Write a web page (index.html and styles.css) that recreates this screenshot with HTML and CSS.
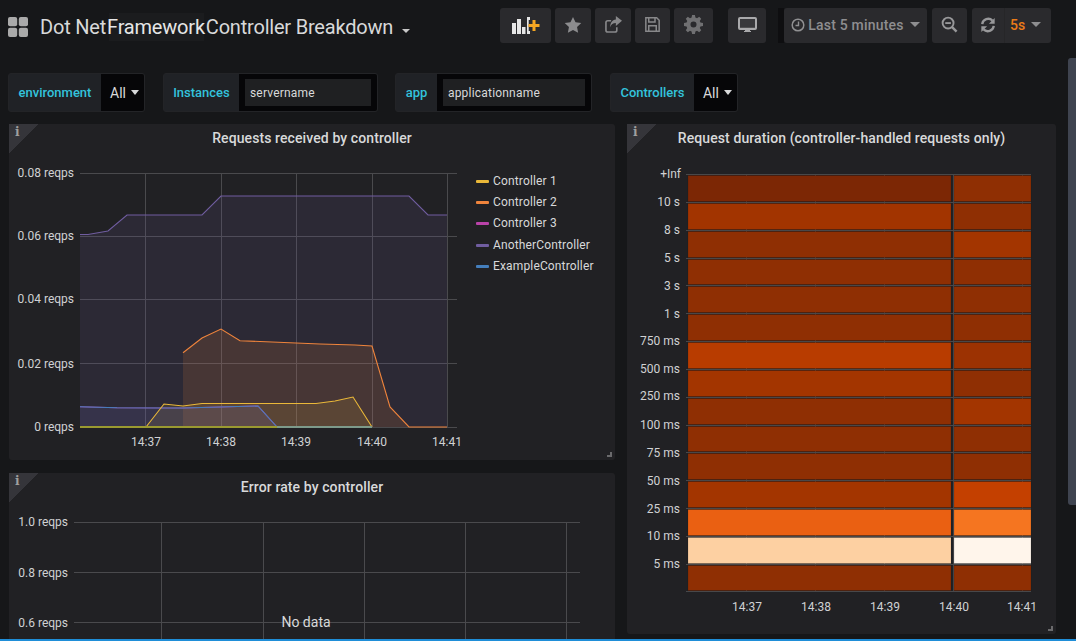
FILE: index.html
```html
<!DOCTYPE html>
<html lang="en">
<head>
<meta charset="utf-8">
<title>Dot Net Framework Controller Breakdown</title>
<link rel="stylesheet" href="styles.css">
</head>
<body>
<div class="page">
  <header class="navbar">
    <div class="brand">
      <svg class="logo" viewBox="0 0 20 20"><rect x="0" y="0" width="9.2" height="9.2" rx="2"/><rect x="10.8" y="0" width="9.2" height="9.2" rx="2"/><rect x="0" y="10.8" width="9.2" height="9.2" rx="2"/><rect x="10.8" y="10.8" width="9.2" height="9.2" rx="2"/></svg>
      <h1 class="dash-title"><span>Dot Net</span><span class="hl">Framework</span><span>Controller Breakdown</span></h1>
      <span class="title-caret"></span>
    </div>
    <div class="actions">
      <button class="btn b-add"><svg viewBox="0 0 28 18" width="28" height="18"><g fill="#e6e6e6"><rect x="0" y="7" width="4" height="11"/><rect x="5" y="3" width="4" height="15"/><rect x="10" y="11" width="3.500" height="7"/><path d="M15 1h3v3h-1.300v11H18v3h-3z"/></g><path fill="#f5a623" d="M20.500 4h3v4h4v3h-4v4h-3v-4h-4V8h4z"/></svg></button>
      <button class="btn b-star"><svg viewBox="0 0 20 20" width="18" height="18"><path fill="#8c8c8e" d="M10 1l2.800 6 6.400.8-4.700 4.400 1.200 6.500L10 15.500l-5.700 3.200 1.200-6.500L.8 7.800 7.200 7z"/></svg></button>
      <button class="btn b-share"><svg viewBox="0 0 18 18" width="17" height="17"><path fill="none" stroke="#88888a" stroke-width="1.700" d="M12.500 12v3a2 2 0 0 1-2 2H3a2 2 0 0 1-2-2V7a2 2 0 0 1 2-2h3.500"/><path fill="#88888a" d="M11.500 0L18 5l-6.500 5.500V7.500C8.500 7.500 6.500 8.800 5.500 12c0-5 2-7.800 6-8.400z"/></svg></button>
      <button class="btn b-save"><svg viewBox="0 0 18 18" width="15" height="15"><path fill="none" stroke="#88888a" stroke-width="1.800" d="M1 1h13l3 3v13H1z"/><path fill="none" stroke="#88888a" stroke-width="1.800" d="M4.500 1v5h7.500V1M4.500 17v-6.500h9V17"/></svg></button>
      <button class="btn b-cog"><svg viewBox="0 0 20 20" width="19" height="19"><path fill="#707072" d="M8.500 0h3l.5 2.700 1.700.7 2.300-1.500 2.100 2.100-1.500 2.300.7 1.700 2.700.5v3l-2.700.5-.7 1.700 1.500 2.300-2.100 2.100-2.300-1.500-1.700.7-.5 2.700h-3L8 17.300l-1.700-.7L4 18.100 1.900 16l1.500-2.300-.7-1.700L0 11.500v-3l2.700-.5.7-1.700L1.900 4 4 1.900l2.300 1.500L8 2.700zM10 6.800a3.200 3.200 0 1 0 0 6.400 3.200 3.200 0 0 0 0-6.400z" fill-rule="evenodd"/></svg></button>
      <button class="btn b-tv"><svg viewBox="0 0 19 15" width="19" height="15"><path fill="#a9a9ab" fill-rule="evenodd" d="M2 0h15a2 2 0 0 1 2 2v9a2 2 0 0 1-2 2h-5v1h1v1H6v-1h1v-1H2a2 2 0 0 1-2-2V2a2 2 0 0 1 2-2zm0 2v8.500h15V2z"/><rect x="2" y="2" width="15" height="8.500" fill="#38383b"/></svg></button>
      <div class="sliver"></div>
      <button class="btn b-time"><svg class="clock" viewBox="0 0 14 14" width="14" height="14"><circle cx="7" cy="7" r="5.800" fill="none" stroke="#909092" stroke-width="1.500"/><path d="M7.500 3.500V7.500H4.500" fill="none" stroke="#909092" stroke-width="1.400"/></svg><span class="time-text">Last 5 minutes</span><span class="caret"></span></button>
      <button class="btn b-zoom"><svg viewBox="0 0 18 18" width="17" height="17"><circle cx="7.500" cy="7.500" r="5.800" fill="none" stroke="#98989a" stroke-width="2"/><path d="M4.500 7.500h6" stroke="#98989a" stroke-width="2"/><path d="M11.500 11.500l5 5" stroke="#98989a" stroke-width="2.600"/></svg></button>
      <div class="btn b-refresh">
        <span class="ref-icon"><svg viewBox="0 0 18 18" width="16" height="16"><path fill="none" stroke="#98989a" stroke-width="2.600" d="M2.500 8a6.800 6.800 0 0 1 11.500-4M15.500 10A6.800 6.800 0 0 1 4 14"/><path fill="#98989a" d="M16.500 1v6.500H10zM1.500 17v-6.500H8z"/></svg></span>
        <span class="ref-int"><span class="interval">5s</span><span class="caret"></span></span>
      </div>
    </div>
  </header>

  <section class="submenu">
    <div class="var v-env"><label class="var-label l-env">environment</label><div class="var-val"><span>All</span><span class="caret light"></span></div></div>
    <div class="var"><label class="var-label l-inst">Instances</label><div class="var-input i-inst"><span class="field">servername</span></div></div>
    <div class="var v-app"><label class="var-label l-app">app</label><div class="var-input i-app"><span class="field">applicationname</span></div></div>
    <div class="var"><label class="var-label l-ctl">Controllers</label><div class="var-val"><span>All</span><span class="caret light"></span></div></div>
  </section>

  <main class="dash">
    <div class="col-left">
      <article class="panel p-req">
        <div class="info"><span>i</span></div>
        <h2 class="panel-title">Requests received by controller</h2>
        <div class="graph-row">
          <svg class="plot" width="458" height="308" viewBox="9 152 458 308">
            <g class="grid">
              <path d="M80 173.500H457M80 236.500H457M80 299.500H457M80 363.500H457M80 427.500H457"/>
              <path d="M145.500 173V427M221.500 173V427M296.500 173V427M372.500 173V427M447.500 173V427"/>
            </g>
            <polygon fill="#705da0" fill-opacity=".14" points="80,234.500 88,234.500 108,231 127,215 202,215 221,196 409,196 428,215 447,215 447,427 80,427"/>
            <polygon fill="#ef843c" fill-opacity=".14" points="183,352.700 202,338 221,329 240,340.700 320,344 355,345 372,346 390,407 409,427 183,427"/>
            <polygon fill="#eab839" fill-opacity=".12" points="146,427 164,404 183,406 202,403.500 316,403.500 335,401 353,397 372,427"/>
            <polygon fill="#447ebc" fill-opacity=".11" points="80,406.700 117,407.700 183,408 258,406 277,427 80,427"/>
            <polygon fill="#ba43a9" fill-opacity=".06" points="80,406.700 117,407.700 183,408 258,406 277,427 80,427"/>
            <polyline class="ln" stroke="#705da0" points="80,234.500 88,234.500 108,231 127,215 202,215 221,196 409,196 428,215 447,215"/>
            <polyline class="ln" stroke="#ba43a9" points="80,406.700 117,407.700 183,408 258,406 277,427"/>
            <polyline class="ln" stroke="#447ebc" points="80,406.700 117,407.700 183,408 258,406 277,427 372,427"/>
            <polyline class="ln" stroke="#ef843c" points="183,352.700 202,338 221,329 240,340.700 320,344 355,345 372,346 390,407 409,427 447,427"/>
            <polyline class="ln" stroke="#eab839" points="146,427 164,404 183,406 202,403.500 316,403.500 335,401 353,397 372,427"/>
            <path stroke="#9a9a30" stroke-width="2" d="M80 427H277"/>
            <path stroke="#7d9a8a" stroke-width="2" d="M277 427H372"/>
            <g class="ax end">
              <text x="74" y="177">0.08 reqps</text><text x="74" y="240">0.06 reqps</text><text x="74" y="303">0.04 reqps</text><text x="74" y="368">0.02 reqps</text><text x="74" y="431">0 reqps</text>
            </g>
            <g class="ax mid">
              <text x="146" y="446">14:37</text><text x="221" y="446">14:38</text><text x="296" y="446">14:39</text><text x="372" y="446">14:40</text><text x="447" y="446">14:41</text>
            </g>
          </svg>
          <ul class="legend">
            <li><i class="c1"></i>Controller 1</li>
            <li><i class="c2"></i>Controller 2</li>
            <li><i class="c3"></i>Controller 3</li>
            <li><i class="c4"></i>AnotherController</li>
            <li><i class="c5"></i>ExampleController</li>
          </ul>
        </div>
        <div class="resize"></div>
      </article>
      <article class="panel p-err">
        <div class="info"><span>i</span></div>
        <h2 class="panel-title">Error rate by controller</h2>
        <svg class="plot" width="606" height="140" viewBox="9 501 606 140">
          <g class="grid">
            <path d="M74 522.500H580M74 572.500H580M74 622.500H580"/>
            <path d="M161.500 522V641M263.500 522V641M364.500 522V641M465.500 522V641M566.500 522V641"/>
          </g>
          <g class="ax end">
            <text x="68" y="526">1.0 reqps</text><text x="68" y="577">0.8 reqps</text><text x="68" y="627">0.6 reqps</text>
          </g>
        </svg>
        <div class="nodata">No data</div>
      </article>
    </div>
    <article class="panel p-heat">
      <div class="info"><span>i</span></div>
      <h2 class="panel-title">Request duration (controller-handled requests only)</h2>
      <svg class="plot" width="429" height="482" viewBox="627 152 429 482">
        <g class="grid heat-grid">
          <path d="M746.500 174V592M815.500 174V592M884.500 174V592M953.500 174V592M1022.500 174V592"/>
          <path d="M686 174.500H1031M686 202.500H1031M686 230.500H1031M686 258.500H1031M686 285.500H1031M686 313.500H1031M686 341.500H1031M686 369.500H1031M686 397.500H1031M686 425.500H1031M686 452.500H1031M686 480.500H1031M686 508.500H1031M686 536.500H1031M686 564.500H1031M686 591.500H1031"/>
        </g>
        <g class="cells">
          <rect x="688" y="175.500" width="263" height="26" fill="#7c2705"/><rect x="954" y="175.500" width="77" height="26" fill="#8f2f03"/>
          <rect x="688" y="203.500" width="263" height="26" fill="#a23400"/><rect x="954" y="203.500" width="77" height="26" fill="#8f2f03"/>
          <rect x="688" y="231.500" width="263" height="26" fill="#8f2f03"/><rect x="954" y="231.500" width="77" height="26" fill="#a33500"/>
          <rect x="688" y="259.500" width="263" height="25" fill="#8f2f03"/><rect x="954" y="259.500" width="77" height="25" fill="#8f2f03"/>
          <rect x="688" y="286.500" width="263" height="26" fill="#8f2f03"/><rect x="954" y="286.500" width="77" height="26" fill="#8f2f03"/>
          <rect x="688" y="314.500" width="263" height="26" fill="#8f2f03"/><rect x="954" y="314.500" width="77" height="26" fill="#8f2f03"/>
          <rect x="688" y="342.500" width="263" height="26" fill="#b83c00"/><rect x="954" y="342.500" width="77" height="26" fill="#9c3202"/>
          <rect x="688" y="370.500" width="263" height="26" fill="#a33500"/><rect x="954" y="370.500" width="77" height="26" fill="#8f2f03"/>
          <rect x="688" y="398.500" width="263" height="26" fill="#8f2f03"/><rect x="954" y="398.500" width="77" height="26" fill="#a33500"/>
          <rect x="688" y="426.500" width="263" height="25" fill="#8f2f03"/><rect x="954" y="426.500" width="77" height="25" fill="#8f2f03"/>
          <rect x="688" y="453.500" width="263" height="26" fill="#8f2f03"/><rect x="954" y="453.500" width="77" height="26" fill="#8f2f03"/>
          <rect x="688" y="481.500" width="263" height="26" fill="#a33500"/><rect x="954" y="481.500" width="77" height="26" fill="#c44000"/>
          <rect x="688" y="509.500" width="263" height="26" fill="#ea6012"/><rect x="954" y="509.500" width="77" height="26" fill="#f57520"/>
          <rect x="688" y="537.500" width="263" height="26" fill="#fdd0a2"/><rect x="954" y="537.500" width="77" height="26" fill="#fff5eb"/>
          <rect x="688" y="565.500" width="263" height="25" fill="#8f2f03"/><rect x="954" y="565.500" width="77" height="25" fill="#8f2f03"/>
        </g>
        <g class="ax end">
          <text x="681" y="178">+Inf</text><text x="680" y="206">10 s</text><text x="680" y="234">8 s</text><text x="680" y="262">5 s</text><text x="680" y="290">3 s</text><text x="680" y="318">1 s</text><text x="680" y="345">750 ms</text><text x="680" y="373">500 ms</text><text x="680" y="400">250 ms</text><text x="680" y="429">100 ms</text><text x="680" y="457">75 ms</text><text x="680" y="485">50 ms</text><text x="680" y="513">25 ms</text><text x="680" y="540">10 ms</text><text x="680" y="568">5 ms</text>
        </g>
        <g class="ax mid">
          <text x="747" y="611">14:37</text><text x="816" y="611">14:38</text><text x="885" y="611">14:39</text><text x="954" y="611">14:40</text><text x="1022" y="611">14:41</text>
        </g>
      </svg>
      <div class="resize"></div>
    </article>
  </main>
</div>
<div class="scrollbar"></div>
<div class="bottom-line"></div>
</body>
</html>
```
FILE: styles.css
```css
* { box-sizing: border-box; }
html, body { margin: 0; height: 100%; overflow: hidden; background: #161719; }
body { font-family: Roboto, "Liberation Sans", sans-serif; color: #d8d9da; }
.page { width: 1076px; height: 641px; overflow: hidden; }

.navbar { height: 51px; padding: 8px 25px 0 8px; display: flex; justify-content: space-between; align-items: flex-start; }
.brand { display: flex; align-items: center; height: 38px; }
.logo { width: 20px; height: 20px; fill: #aaaaaa; margin-right: 12px; }
.dash-title { margin: 0; font-size: 20px; font-weight: 400; letter-spacing: -.2px; color: #d8d9da; display: flex; gap: 1px; white-space: nowrap; position: relative; z-index: 0; }
.dash-title .hl { position: relative; color: #e6e6e6; }
.dash-title .hl::before { content: ""; position: absolute; z-index: -1; left: 2px; right: 1px; top: -2px; height: 28px; background: #1b1c1e; }
.title-caret { margin: 7px 0 0 9px; border: 4px solid transparent; border-top-color: #c8c8c8; border-bottom-width: 0; }

.actions { display: flex; align-items: flex-start; gap: 4px; }
.btn { height: 35px; background: #2a2a2d; border: 0; border-radius: 3px; padding: 0; display: flex; align-items: center; justify-content: center; color: #8e8e90; font: inherit; }
.btn > svg { margin-top: -2px; }
.b-add { width: 51px; }
.b-star { width: 36px; }
.b-share { width: 36px; }
.b-save { width: 35px; }
.b-cog { width: 39px; margin-right: 11px; }
.b-tv { width: 38px; margin-right: 8px; }
.sliver { width: 6px; height: 35px; background: #0e0e10; margin-right: -4px; }
.b-time { width: 143px; font-size: 14px; padding-bottom: 2px; }
.b-time .clock { margin-top: 0; margin-right: 3px; }
.time-text { color: #8e8e90; font-weight: 500; letter-spacing: .2px; }
.caret { width: 0; height: 0; border: 5px solid transparent; border-top-color: #8e8e90; border-bottom-width: 0; margin-left: 6px; }
.caret.light { border-top-color: #d8d9da; border-width: 5px 4px 0; margin-left: 5px; }
.b-zoom { width: 35px; margin-left: 1px; }
.b-refresh { width: 79px; justify-content: flex-start; margin-left: 1px; }
.ref-icon { width: 33px; height: 35px; padding-bottom: 2px; display: flex; align-items: center; justify-content: center; border-right: 1px solid #262628; }
.ref-int { display: flex; align-items: center; padding: 0 0 2px 5px; font-size: 14px; font-weight: 500; }
.interval { color: #eb7b18; }

.submenu { height: 73px; padding: 22px 0 0 8px; display: flex; align-items: flex-start; gap: 17px; }
.var { display: flex; height: 39px; background: #202226; border: 1px solid #232427; border-radius: 3px; overflow: hidden; }
.v-env, .v-app { margin-right: 1px; }
.var-label { font-size: 13px; font-weight: 500; color: #33c3dc; display: flex; align-items: center; justify-content: center; }
.l-env { width: 92px; }
.l-inst { width: 75px; }
.l-app { width: 41px; }
.l-ctl { width: 83px; }
.var-val { background: #060608; color: #d8d9da; font-size: 14px; padding: 0 5px 0 9px; display: flex; align-items: center; }
.var-input { background: #060608; padding: 5px 6px; display: flex; }
.i-inst { width: 138px; }
.i-app { width: 154px; }
.field { flex: 1; background: #1f2022; color: #d8d9da; font-size: 12px; letter-spacing: .2px; padding-left: 5px; display: flex; align-items: center; }

.dash { display: flex; gap: 12px; padding-left: 9px; }
.col-left { width: 606px; display: flex; flex-direction: column; gap: 13px; }
.panel { position: relative; background: #212124; border-radius: 3px; }
.p-req { height: 336px; }
.p-err { height: 300px; }
.p-heat { width: 429px; height: 510px; }
.panel-title { margin: 0; height: 28px; line-height: 28px; text-align: center; font-size: 14px; font-weight: 500; letter-spacing: .1px; color: #d8d9da; }
.plot { display: block; }
.graph-row { display: flex; }

.info { position: absolute; left: 0; top: 0; width: 30px; height: 30px; background: linear-gradient(135deg, #35353a 50%, transparent 50%); }
.info span { position: absolute; left: 6px; top: 1px; font: 700 12px "DejaVu Serif", serif; color: #a0a0a0; }
.resize { position: absolute; right: 3px; bottom: 3px; width: 5px; height: 5px; border-right: 2px solid #6a6a6c; border-bottom: 2px solid #6a6a6c; }
.nodata { position: absolute; left: 0; width: 594px; top: 141px; text-align: center; font-size: 14px; color: #d8d9da; }

.grid path { fill: none; stroke: #4a4a4d; stroke-width: 1; }
.heat-grid path { stroke: #48484a; }
.cells rect { stroke: #000; stroke-opacity: .12; stroke-width: 1; }
.ln { fill: none; stroke-width: 1.100; }
.ax text { font-size: 12px; fill: #d0d1d3; font-family: Roboto, "Liberation Sans", sans-serif; }
.ax.end text { text-anchor: end; }
.ax.mid text { text-anchor: middle; }

.legend { list-style: none; margin: 0; padding: 19px 0 0 9px; font-size: 12px; letter-spacing: .15px; color: #d8d9da; }
.legend li { height: 21.2px; line-height: 21.2px; display: flex; align-items: center; white-space: nowrap; }
.legend i { width: 13px; height: 3px; margin-right: 4px; border-radius: 1px; }
.c1 { background: #eab839; } .c2 { background: #ef843c; } .c3 { background: #ba43a9; } .c4 { background: #705da0; } .c5 { background: #447ebc; }

.scrollbar { position: fixed; right: 0; top: 58px; width: 8px; height: 447px; background: #3f4450; border-radius: 3px 0 0 3px; }
.bottom-line { position: fixed; left: 0; right: 0; bottom: 0; height: 2px; background: #1f8ed8; }
```
